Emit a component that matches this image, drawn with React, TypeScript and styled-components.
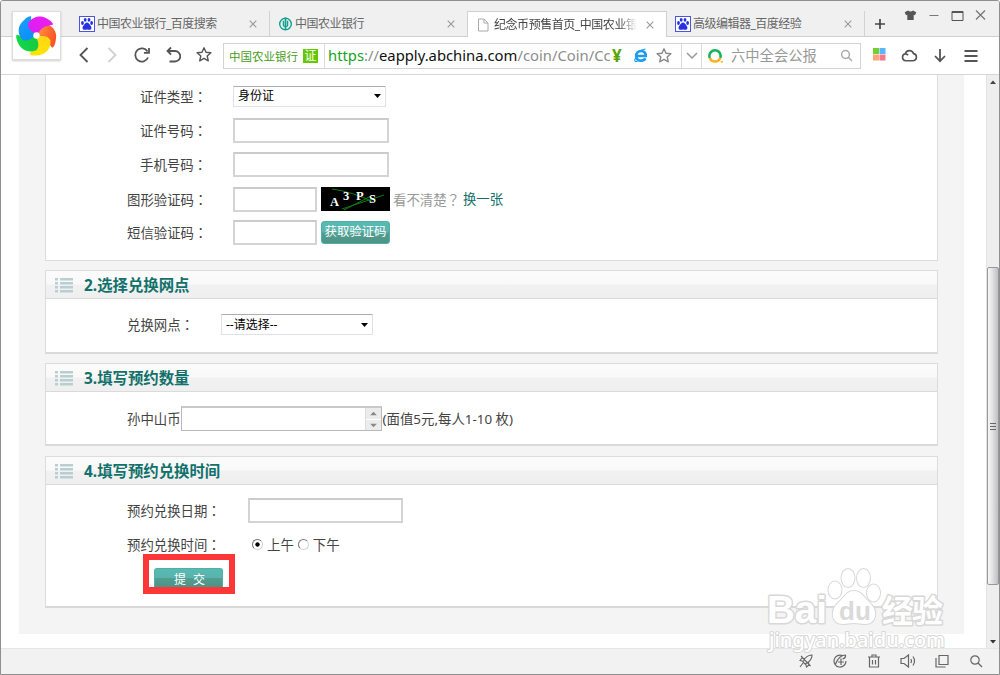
import React from "react";
import styled, { createGlobalStyle, css } from "styled-components";

const GlobalStyle = createGlobalStyle`
  * { box-sizing: border-box; }
  body { margin: 0; background: #fff; }
  body, input, select, button {
    font-family: "Noto Sans", "Noto Sans CJK SC", sans-serif;
  }
`;

const Window = styled.div`
  position: relative;
  display: flex;
  flex-direction: column;
  width: 1000px;
  height: 675px;
  overflow: hidden;
  background: #fff;
  border: 1px solid #8f8f8f;
  border-radius: 3px 3px 0 0;
  color: #444;
`;

/* ---------- browser chrome ---------- */

const TabStrip = styled.div`
  display: flex;
  align-items: flex-end;
  height: 36px;
  flex: none;
  background: #f0f0f0;
  padding-left: 70px;
  box-shadow: inset 0 -1px #cfcfcf;
`;

const Tab = styled.div<{ $active?: boolean; $width: number }>`
  display: flex;
  align-items: center;
  width: ${(p) => p.$width}px;
  height: 26px;
  padding: 0 12px 0 8px;
  border-right: 1px solid #d2d2d2;
  ${(p) =>
    p.$active &&
    css`
      background: #fff;
      border: 1px solid #cfcfcf;
      border-bottom: 0;
      border-left: 0;
      padding-left: 9px;
    `}
  > svg { flex: none; }
`;

const TabTitle = styled.span<{ $active?: boolean; $w: number }>`
  flex: none;
  width: ${(p) => p.$w}px;
  margin-left: ${(p) => (p.$active ? 5 : 2)}px;
  font-size: 12px;
  letter-spacing: -0.5px;
  line-height: 20px;
  white-space: nowrap;
  color: ${(p) => (p.$active ? "#444" : "#666")};
  ${(p) =>
    p.$active &&
    css`
      letter-spacing: -0.45px;
      mask-image: linear-gradient(90deg, #000 88%, transparent 100%);
    `}
`;

const TabClose = styled.svg`
  margin-left: auto;
`;

const WindowButtons = styled.div`
  display: flex;
  align-self: flex-start;
  align-items: center;
  gap: 11px;
  margin: 6px 0 0 18px;
`;

const NewTab = styled.div`
  width: 12px;
  height: 26px;
  margin-left: 9px;
  display: flex;
  align-items: center;
`;

const LogoCard = styled.div`
  position: absolute;
  left: 11px;
  top: 10px;
  width: 49px;
  height: 49px;
  background: #fff;
  border: 1px solid #ddd;
  box-shadow: 0 1px 2px rgba(0, 0, 0, 0.2);
`;

const Toolbar = styled.div`
  display: flex;
  align-items: center;
  flex: none;
  height: 38px;
  padding-left: 74px;
  border-bottom: 1px solid #d6d6d6;
`;

const NavIcons = styled.div`
  display: flex;
  gap: 12px;
  width: 148px;
  margin-top: -1px;
  > svg { flex: none; }
  > svg:last-child { margin-left: 3px; }
`;

const AddressBar = styled.div`
  display: flex;
  align-items: center;
  height: 26px;
  width: 638px;
  border: 1px solid #d3d3d3;
`;

const SiteName = styled.div`
  display: flex;
  align-items: center;
  gap: 5px;
  width: 101px;
  height: 24px;
  padding-left: 5px;
  border-right: 1px solid #d9d9d9;
  font-size: 11.5px;
  color: #4a9c1b;
  white-space: nowrap;
`;

const SiteBadge = styled.span`
  width: 15px;
  height: 14px;
  background: #64c800;
  color: #fff;
  font-size: 12px;
  line-height: 13px;
  text-align: center;
`;

const Url = styled.div`
  width: 282px;
  margin: -1px 0 0 3px;
  overflow: hidden;
  white-space: nowrap;
  font-size: 14.8px;
  line-height: 22px;
  color: #8d8d8d;
  b { font-weight: 400; color: #17a51c; }
  strong { font-weight: 400; color: #111; }
`;

const Yen = styled.span`
  width: 13px;
  margin-left: 2px;
  font-size: 17px;
  font-weight: 700;
  line-height: 22px;
  color: #5aa60a;
`;

const UrlIcons = styled.div`
  display: flex;
  align-items: center;
  gap: 8px;
  margin-left: 8px;
`;

const DropCell = styled.div`
  display: flex;
  align-items: center;
  justify-content: center;
  width: 21px;
  height: 24px;
  margin-left: auto;
  border: solid #d9d9d9;
  border-width: 0 1px;
`;

const Search = styled.div`
  display: flex;
  align-items: center;
  width: 158px;
  padding: 0 7px 0 6px;
  font-size: 14.3px;
  color: #999;
  > span { margin: 0 auto 0 7px; line-height: 22px; }
`;

const ToolIcons = styled.div`
  display: flex;
  align-items: center;
  gap: 15px;
  margin-left: 11px;
`;

/* ---------- page ---------- */

const Viewport = styled.div`
  display: flex;
  flex: none;
  height: 573px;
`;

const Page = styled.div`
  width: 945px;
  height: 559px;
  margin-left: 18px;
  padding: 0 26px;
  background: #f4f4f4;
`;

const Panel = styled.section<{ $h: number; $mb?: number; $open?: boolean }>`
  height: ${(p) => p.$h}px;
  margin-bottom: ${(p) => p.$mb ?? 9}px;
  background: #fff;
  border: 1px solid #dcdcdc;
  border-bottom: 2px solid #d9d9d9;
  ${(p) =>
    p.$open &&
    css`
      border-top: 0;
      border-bottom: 1px solid #dcdcdc;
      padding-top: 4px;
    `}
`;

const PanelHead = styled.h2`
  display: flex;
  align-items: center;
  gap: 11px;
  height: 28px;
  margin: 0;
  padding: 1px 0 0 9px;
  border-bottom: 1px solid #dadada;
  background: linear-gradient(#fbfbfb 0, #f9f9f9 48%, #f1f1f1 52%, #efefef);
  font-size: 15.4px;
  font-weight: 700;
  line-height: 24px;
  color: #12716b;
  span { padding-top: 2px; }
`;

const Row = styled.div<{ $h?: number }>`
  display: flex;
  align-items: center;
  height: ${(p) => p.$h ?? 34}px;
  padding-left: 81px;
  font-size: 13.4px;
  line-height: 20px;
  white-space: nowrap;
`;

const Label = styled.label<{ $w: number; $gap?: number; $right?: boolean }>`
  width: ${(p) => p.$w}px;
  margin-right: ${(p) => p.$gap ?? 0}px;
  text-align: ${(p) => (p.$right ? "right" : "left")};
`;

const Mark = styled.span`
  font-family: "Noto Sans CJK TC", sans-serif;
`;

const TextInput = styled.input<{ $w: number }>`
  width: ${(p) => p.$w}px;
  height: 25px;
  padding: 0 4px;
  border: 2px solid #d4d4d4;
  border-top-color: #cbcbcb;
  border-radius: 0;
  background: #fff;
  outline: 0;
`;

const SelectBox = styled.div<{ $w: number }>`
  display: flex;
  align-items: center;
  justify-content: space-between;
  width: ${(p) => p.$w}px;
  height: 21px;
  padding: 0 4px;
  border: 1px solid #dfe1ea;
  border-top-color: #abadb3;
  border-radius: 1px;
  font-size: 12px;
  color: #000;
`;

const Captcha = styled.svg`
  margin-left: 4px;
  background: #000;
`;

const Hint = styled.span`
  margin: 0 0 0 3px;
  color: #999;
`;

const Link = styled.a`
  margin-left: 3px;
  color: #12716b;
`;

const TealButton = styled.button<{ $ml: number; $submit?: boolean }>`
  width: 69px;
  height: 23px;
  margin-left: ${(p) => p.$ml}px;
  padding: 0 0 1px;
  border: 1px solid #4eb0a8;
  border-radius: 3px;
  background: linear-gradient(#56bbb2 0, #5ab3ac 48%, #529e92 52%, #4e9385);
  color: #fff;
  font-size: 12.4px;
  line-height: 18px;
  white-space: nowrap;
  ${(p) =>
    p.$submit &&
    css`
      display: block;
      height: 19px;
      padding: 1px 0 0 2px;
      border-bottom: 0;
      border-radius: 3px 3px 0 0;
      font-size: 12px;
      word-spacing: 4px;
      line-height: 19px;
    `}
`;

const Spinner = styled.div`
  display: flex;
  width: 201px;
  height: 25px;
  margin-right: 1px;
  border: 1px solid #b9b9b9;
  border-top: 2px solid #c9c9c9;
`;

const SpinButtons = styled.div`
  display: grid;
  grid-template-rows: 1fr 1fr;
  gap: 1px;
  width: 16px;
  margin-left: auto;
  border-left: 1px solid #ddd;
  svg { width: 15px; height: 100%; background: #ececec; display: block; }
`;

const Radio = styled.span<{ $on?: boolean }>`
  width: 11px;
  height: 11px;
  margin-right: 4px;
  border: 1px solid #d4d4d4;
  border-top-color: #777;
  border-left-color: #777;
  border-radius: 50%;
  background: ${(p) =>
    p.$on ? "radial-gradient(circle, #000 0 1.8px, #fff 2.5px)" : "#fff"};
`;

const RadioText = styled.span`
  margin-right: 4px;
`;

const SubmitFrame = styled.div`
  width: 92px;
  height: 40px;
  margin: 0 0 0 97px;
  padding: 8px 0 0;
  border: 6px solid #fd3638;
  border-bottom-width: 7px;
  background: #fff;
`;

const ScrollBar = styled.div`
  display: flex;
  flex-direction: column;
  width: 13px;
  height: 573px;
  margin-left: auto;
  background: #eee;
  border-left: 1px solid #e3e3e3;
`;

const ScrollArrow = styled.svg<{ $grow?: boolean }>`
  display: block;
  width: 12px;
  height: 14px;
  ${(p) => p.$grow && "margin-top: auto;"}
`;

const Thumb = styled.div`
  display: flex;
  align-items: center;
  justify-content: center;
  height: 318px;
  margin-top: 178px;
  border: 1px solid #989898;
  border-radius: 2px;
  background: linear-gradient(90deg, #f7f7f7, #dedee0 50%, #bebec4);
`;

const StatusBar = styled.div`
  display: flex;
  align-items: center;
  justify-content: flex-end;
  gap: 18px;
  flex: 1;
  padding: 0 15px 1px 0;
  border-top: 1px solid #e6e6e6;
  background: #f2f2f2;
`;

const Watermark = styled.div`
  position: absolute;
  left: 765px;
  top: 564px;
  width: 184px;
  height: 90px;
  pointer-events: none;
  svg { display: block; }
`;

/* ---------- drawings ---------- */

const PawIcon = () => (
  <svg width="16" height="16" viewBox="0 0 16 16">
    <rect x=".5" y=".5" width="15" height="15" fill="#fff" stroke="#4a55e0" />
    <g fill="#2932e1">
      <ellipse cx="3.5" cy="7" rx="1.4" ry="1.9" />
      <ellipse cx="6.2" cy="3.8" rx="1.4" ry="1.9" />
      <ellipse cx="10" cy="3.8" rx="1.4" ry="1.9" />
      <ellipse cx="12.6" cy="7" rx="1.4" ry="1.9" />
      <path d="M8 6.6c1.6 0 2.2 1.6 3.4 2.8 1.8 1.8 1.2 4.4-1 4.3-1 0-1.5-.3-2.4-.3s-1.4.3-2.4.3c-2.2 0-2.8-2.5-1-4.3C5.8 8.2 6.4 6.6 8 6.6z" />
    </g>
  </svg>
);

const BankIcon = () => (
  <svg width="15" height="16" viewBox="0 0 16 16" fill="none" stroke="#12a08f">
    <circle cx="8" cy="8" r="6.2" strokeWidth="1.5" />
    <path d="M8 1v13" strokeWidth="1.8" />
    <path d="M5.8 4.5v5q0 1 2.2 1t2.2-1v-5" strokeWidth="1.5" />
  </svg>
);

const PageIcon = () => (
  <svg width="12" height="14" viewBox="0 0 12 14" fill="none" stroke="#aaa">
    <path d="M1.5 1h5.5l4 4v8H1.5zM7 1v4h4" />
  </svg>
);

const Close = () => (
  <TabClose width="8" height="8" viewBox="0 0 8 8" stroke="#999" strokeWidth="1.1">
    <path d="M.7.7l6.6 6.6M7.3.7L.7 7.3" />
  </TabClose>
);

const BLADES: [string, string][] = [
  ["#fb3f22", "#ff9a3c"],
  ["#ffe900", "#ffd21a"],
  ["#12d94b", "#14c83c"],
  ["#19a0ff", "#0b8cf5"],
  ["#f01cf0", "#d820f5"],
];

const BLADE_PATH =
  "M-1-2C-6-4-9-8-8.5-12C-5-18 1-20 6-18.7C10-17.5 16.5-14 16.5-11C13-9.5 10-10 6-7.5C4-6 3-4 1.5-2z";

const Pinwheel = () => (
  <svg width="47" height="47" viewBox="-23.5 -23.5 47 47">
    <defs>
      {BLADES.map(([a, b], i) => (
        <linearGradient key={i} id={`blade${i}`} x1="1" y1="0" x2="0" y2="1">
          <stop offset="0" stopColor={a} />
          <stop offset="1" stopColor={b} />
        </linearGradient>
      ))}
    </defs>
    {BLADES.map((_, i) => (
      <path
        key={i}
        fill={`url(#blade${i})`}
        transform={`rotate(${72 * (i + 1)})`}
        d={BLADE_PATH}
      />
    ))}
    <circle r="3.2" fill="#fff" />
  </svg>
);

const ListIcon = () => (
  <svg width="18" height="15" viewBox="0 0 18 15" fill="#b9ced0">
    {[0, 4, 8, 12].map((y) => (
      <g key={y}>
        <rect x="0" y={y} width="3" height="2.5" />
        <rect x="5" y={y} width="13" height="2.5" />
      </g>
    ))}
  </svg>
);

const Caret = () => (
  <svg width="7" height="4" viewBox="0 0 7 4">
    <path d="M0 0h7L3.5 4z" fill="#000" />
  </svg>
);

const Star = ({ color }: { color: string }) => (
  <svg width="16" height="17" viewBox="0 0 16 16" fill="none" stroke={color} strokeWidth="1.4" strokeLinejoin="round">
    <path d="M8 1.3l2 4.5 4.9.5-3.7 3.2 1.1 4.8L8 11.8l-4.3 2.5 1.1-4.8L1.1 6.3 6 5.8z" />
  </svg>
);

const TabItem = ({ icon, title, width, text, active }: any) => (
  <Tab $width={width} $active={active}>
    {icon}
    <TabTitle $w={text} $active={active}>{title}</TabTitle>
    <Close />
  </Tab>
);

const Heading = ({ children }: { children: React.ReactNode }) => (
  <PanelHead><ListIcon /><span>{children}</span></PanelHead>
);

const FieldLabel = ({ text, w, gap, right }: { text: string; w: number; gap?: number; right?: boolean }) => (
  <Label $w={w} $gap={gap} $right={right}>{text}<Mark>：</Mark></Label>
);

export default function App() {
  return (
    <>
      <GlobalStyle />
      <Window>
        <TabStrip>
          <TabItem icon={<PawIcon />} title="中国农业银行_百度搜索" width={199} text={130} />
          <TabItem icon={<BankIcon />} title="中国农业银行" width={198} text={120} />
          <TabItem icon={<PageIcon />} title="纪念币预售首页_中国农业银" width={199} text={143} active />
          <TabItem icon={<PawIcon />} title="高级编辑器_百度经验" width={198} text={130} />
          <NewTab>
            <svg width="12" height="12" viewBox="0 0 12 12" stroke="#444" strokeWidth="1.7">
              <path d="M6 1v10M1 6h10" />
            </svg>
          </NewTab>
          <WindowButtons>
            <svg width="13" height="14" viewBox="0 0 13 14" fill="#555">
              <path d="M4 2.5q2.5 1.8 5 0l3.3 1.7-1.3 3-1.3-.4V12H3.3V6.8L2 7.2l-1.3-3z" />
            </svg>
            <svg width="12" height="16" viewBox="0 0 12 16" stroke="#777"><path d="M1.5 8.5h9" /></svg>
            <svg width="13" height="16" viewBox="0 0 13 16" fill="none" stroke="#555">
              <path d="M1 4.5h11v9H1z" /><path d="M1 5h11" strokeWidth="2" />
            </svg>
            <svg width="12" height="16" viewBox="0 0 12 16" stroke="#777" strokeWidth="1.3">
              <path d="M1 3.5l9 9M10 3.5l-9 9" />
            </svg>
          </WindowButtons>
        </TabStrip>

        <Toolbar>
          <NavIcons>
            <svg width="18" height="18" viewBox="0 0 18 18" fill="none" stroke="#555" strokeWidth="1.8"><path d="M12.5 2l-7 7 7 7" /></svg>
            <svg width="16" height="18" viewBox="0 0 16 18" fill="none" stroke="#d0d0d0" strokeWidth="1.8"><path d="M3.5 2l7 7-7 7" /></svg>
            <svg width="18" height="18" viewBox="0 0 18 18" fill="none" stroke="#555" strokeWidth="1.8">
              <path d="M14.5 5.5A6.6 6.6 0 1 0 15 11.5" /><path d="M16 2v4.8h-5" />
            </svg>
            <svg width="18" height="18" viewBox="0 0 18 18" fill="none" stroke="#555" strokeWidth="1.8">
              <path d="M8 1.5L4.5 5 8 8.5M4.5 5H12a5 5 0 0 1 0 10.5H6.5" />
            </svg>
            <Star color="#555" />
          </NavIcons>
          <AddressBar>
            <SiteName>中国农业银行<SiteBadge>证</SiteBadge></SiteName>
            <Url><b>https</b>://<strong>eapply.abchina.com</strong>/coin/Coin/Cc</Url>
            <Yen>¥</Yen>
            <UrlIcons>
              <svg width="15" height="15" viewBox="0 0 15 15" fill="none" stroke="#1a9cf0">
                <path d="M3.5 8h9.2c.2-3-1.6-5-4.5-5S3.2 5.2 3.2 8s2 4.7 4.9 4.7c2 0 3.5-.8 4.2-2.4" strokeWidth="2.7" />
                <path d="M3 7C5 4 9 1.5 12.5 1M2.5 10c-1.5 3-.5 4.3 2 3.3" strokeWidth="1.2" />
              </svg>
              <Star color="#888" />
            </UrlIcons>
            <DropCell>
              <svg width="12" height="8" viewBox="0 0 12 8" fill="none" stroke="#999" strokeWidth="1.5"><path d="M1 1l5 5 5-5" /></svg>
            </DropCell>
            <Search>
              <svg width="16" height="16" viewBox="0 0 16 16" fill="none" strokeWidth="2.5">
                <path d="M1.8 10A5.6 5.6 0 1 1 12.2 10" stroke="#17b35b" />
                <path d="M1.8 10A5.6 5.6 0 0 0 12.2 10" stroke="#f9b21d" />
                <circle cx="13.8" cy="13.8" r=".4" stroke="#f9b21d" strokeWidth="1.5" />
              </svg>
              <span>六中全会公报</span>
              <svg width="13" height="13" viewBox="0 0 13 13" fill="none" stroke="#aaa" strokeWidth="1.5">
                <circle cx="5.5" cy="5.5" r="3.9" /><path d="M8.3 8.3l3.7 3.7" />
              </svg>
            </Search>
          </AddressBar>
          <ToolIcons>
            <svg width="14" height="16" viewBox="0 0 14 16">
              <path d="M1 0h6v6H1z" fill="#74d02d" /><path d="M7.5 0h6v6h-6z" fill="#5ab6fb" />
              <path d="M1 6.5h6v6H1z" fill="#ffa578" /><path d="M7.5 6.5h6v6h-6z" fill="#f27b8b" />
            </svg>
            <svg width="17" height="16" viewBox="0 0 18 16" fill="none" stroke="#555" strokeWidth="1.7">
              <path d="M5 13a3.7 3.7 0 0 1-.5-7.3A4.6 4.6 0 0 1 13.3 5.5a3.8 3.8 0 0 1-.3 7.5zM4.5 5.7q2 0 3 1.5" />
            </svg>
            <svg width="14" height="16" viewBox="0 0 14 16" fill="none" stroke="#555" strokeWidth="1.8"><path d="M7 1v12M2 8l5 5.2L12 8" /></svg>
            <svg width="18" height="16" viewBox="0 0 18 16" stroke="#555" strokeWidth="2"><path d="M2.5 3h13M2.5 8h13M2.5 13h13" /></svg>
          </ToolIcons>
        </Toolbar>

        <Viewport>
          <Page>
            <Panel $h={186} $open>
              <Row>
                <FieldLabel text="证件类型" w={80} gap={26} right />
                <SelectBox $w={153}>身份证<Caret /></SelectBox>
              </Row>
              <Row><FieldLabel text="证件号码" w={80} gap={26} right /><TextInput $w={156} /></Row>
              <Row $h={35}><FieldLabel text="手机号码" w={80} gap={26} right /><TextInput $w={156} /></Row>
              <Row $h={34}>
                <FieldLabel text="图形验证码" w={80} gap={26} right />
                <TextInput $w={84} />
                <Captcha width="69" height="24" viewBox="0 0 69 24">
                  <path d="M11 2Q32 5 52 15M21 22L63 8M23 23L50 9" stroke="#107a10" fill="none" />
                  <g fill="#fff" fontFamily="Liberation Serif, serif" fontWeight="700" fontSize="12.5">
                    <text x="9" y="19">A</text>
                    <text x="22" y="13">3</text>
                    <text x="35" y="13">P</text>
                    <text x="48" y="16">S</text>
                  </g>
                </Captcha>
                <Hint>看不清楚<Mark>？</Mark></Hint>
                <Link>换一张</Link>
              </Row>
              <Row $h={32}>
                <FieldLabel text="短信验证码" w={80} gap={26} right />
                <TextInput $w={84} />
                <TealButton $ml={4}>获取验证码</TealButton>
              </Row>
            </Panel>

            <Panel $h={84}>
              <Heading>2.选择兑换网点</Heading>
              <Row $h={51}>
                <FieldLabel text="兑换网点" w={70} gap={24} />
                <SelectBox $w={152}>--请选择--<Caret /></SelectBox>
              </Row>
            </Panel>

            <Panel $h={83} $mb={10}>
              <Heading>3.填写预约数量</Heading>
              <Row $h={53}>
                <span>孙中山币</span>
                <Spinner>
                  <SpinButtons>
                    <svg viewBox="0 0 15 11"><path d="M4 7.5h7L7.5 4z" fill="#888" /></svg>
                    <svg viewBox="0 0 15 11"><path d="M4 4h7L7.5 7.5z" fill="#888" /></svg>
                  </SpinButtons>
                </Spinner>
                <span>(面值5元,每人1-10 枚)</span>
              </Row>
            </Panel>

            <Panel $h={152}>
              <Heading>4.填写预约兑换时间</Heading>
              <Row $h={50}>
                <FieldLabel text="预约兑换日期" w={120.5} />
                <TextInput $w={155.5} />
              </Row>
              <Row $h={19}>
                <FieldLabel text="预约兑换时间" w={125} />
                <Radio $on /><RadioText>上午</RadioText>
                <Radio /><RadioText>下午</RadioText>
              </Row>
              <SubmitFrame>
                <TealButton $ml={5} $submit>提 交</TealButton>
              </SubmitFrame>
            </Panel>
          </Page>
          <ScrollBar>
            <ScrollArrow viewBox="0 0 12 14"><path d="M3 9h6L6 5.5z" fill="#444" /></ScrollArrow>
            <Thumb>
              <svg width="6" height="9" viewBox="0 0 6 9" stroke="#666"><path d="M0 1.5h6M0 4.5h6M0 7.5h6" /></svg>
            </Thumb>
            <ScrollArrow $grow viewBox="0 0 12 14"><path d="M3 6h6L6 9.5z" fill="#333" /></ScrollArrow>
          </ScrollBar>
        </Viewport>

        <StatusBar>
          <svg width="16" height="16" viewBox="0 0 16 16" fill="none" stroke="#666" strokeWidth="1.1">
            <path d="M14 2q-4 0-7 3.5L5 9l2 2 3.5-2Q14 6 14 2zM7 5.5L4 5 2 7.5l3 .8M10.5 9l.5 3-2.5 2-.8-3M5 10l-3 4M3 3l9.5 10" />
          </svg>
          <svg width="16" height="16" viewBox="0 0 16 16" fill="none" stroke="#666" strokeWidth="1.2">
            <path d="M10.5 2.6A6 6 0 1 0 14 8M14 2Q7 2 3.5 11M13.5 2Q14 5 10.5 6M6 9h6M9 5.5v6.5" />
          </svg>
          <svg width="16" height="16" viewBox="0 0 16 16" fill="none" stroke="#666" strokeWidth="1.2">
            <path d="M2 4h12M6 4V2h4v2M3.5 4v10h9V4M6.5 7v4.5M9.5 7v4.5" />
          </svg>
          <svg width="16" height="16" viewBox="0 0 16 16" fill="none" stroke="#666" strokeWidth="1.2">
            <path d="M1 5.5h3L8.5 2v12L4 10.5H1zM10.8 6q1.4 2 0 4M13 3.5q3 4.5 0 9" />
          </svg>
          <svg width="16" height="16" viewBox="0 0 16 16" fill="none" stroke="#666" strokeWidth="1.2">
            <path d="M5 2.5h9v9H5zM2 5v9h9.5" />
          </svg>
          <svg width="16" height="16" viewBox="0 0 16 16" fill="none" stroke="#666" strokeWidth="1.2">
            <circle cx="7" cy="7" r="4.2" /><path d="M10 10l4 4" />
          </svg>
        </StatusBar>

        <LogoCard><Pinwheel /></LogoCard>

        <Watermark>
          <svg width="184" height="90" viewBox="0 0 184 90">
            <g
              fill="#fff"
              stroke="#d8d8d8"
              strokeWidth="2"
              paintOrder="stroke"
              strokeLinejoin="round"
              fontFamily="Liberation Sans, Noto Sans CJK SC, sans-serif"
              fontWeight="700"
            >
              <ellipse cx="69" cy="25" rx="6.5" ry="8.5" />
              <ellipse cx="82" cy="13" rx="6.5" ry="9" />
              <ellipse cx="97.5" cy="13" rx="6.5" ry="9" />
              <ellipse cx="107.5" cy="28" rx="6.5" ry="8.5" />
              <path d="M88 26c8 0 10 7 16 12 8 7 7 21-5 21-4 0-7-1-11-1s-7 1-11 1c-12 0-13-14-5-21 6-5 8-12 16-12z" />
              <text x="1" y="58" fontSize="39" strokeWidth="3" textLength="60" lengthAdjust="spacingAndGlyphs">Bai</text>
              <text x="73" y="55" fontSize="26" fill="#dadada" stroke="none">du</text>
              <text x="116" y="57" fontSize="31" strokeWidth="3" textLength="61">经验</text>
              <text x="3" y="82" fontSize="19" fontWeight="500" fontFamily="Noto Sans, sans-serif" textLength="176" lengthAdjust="spacingAndGlyphs">jingyan.baidu.com</text>
            </g>
          </svg>
        </Watermark>
      </Window>
    </>
  );
}
